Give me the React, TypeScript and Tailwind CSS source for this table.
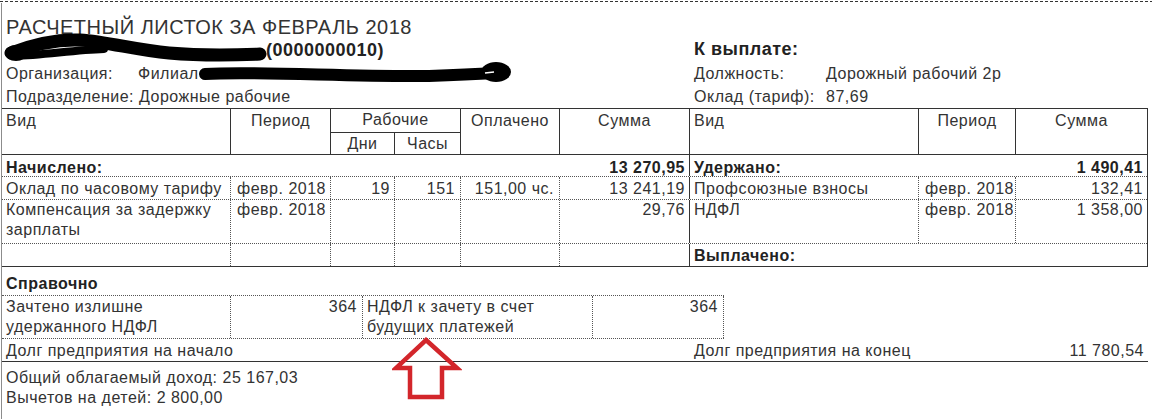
import React from "react";

function NameRedaction() {
  return (
    <svg width="262" height="24" viewBox="0 0 262 24" className="-ml-[2px] shrink-0 overflow-visible">
      <ellipse cx="12" cy="15" rx="11" ry="8" fill="#000" />
      <path
        d="M7 15 C 25 8, 50 1, 76 2 C 104 4, 132 12, 165 15 C 200 18, 235 17, 256 16"
        stroke="#000"
        strokeWidth="13"
        fill="none"
        strokeLinecap="round"
      />
      <path d="M10 18 C 40 17, 70 12, 100 11" stroke="#000" strokeWidth="8" fill="none" strokeLinecap="round" />
    </svg>
  );
}

function OrgRedaction() {
  return (
    <svg width="314" height="22" viewBox="0 0 314 22" className="shrink-0 overflow-visible">
      <path
        d="M6 11 C 60 8, 150 14, 230 13 C 260 12, 280 11, 296 10"
        stroke="#000"
        strokeWidth="12"
        fill="none"
        strokeLinecap="round"
      />
      <ellipse cx="297" cy="9" rx="15" ry="10" fill="#000" />
      <path d="M286 10 L 295 9" stroke="#fff" strokeWidth="1.5" />
    </svg>
  );
}

function UpArrow() {
  return (
    <svg
      width="70"
      height="66"
      viewBox="0 0 70 66"
      className="absolute left-[392px] top-[336px]"
    >
      <polygon
        points="34,4 65,32 50,32 50,61 18,61 18,32 4,32"
        fill="none"
        stroke="#d3262b"
        strokeWidth="4.5"
        strokeLinejoin="miter"
      />
    </svg>
  );
}

const dot = "border-dotted border-[#555]";

export default function App() {
  return (
    <div className="relative w-[1152px] h-[419px] overflow-hidden bg-white text-[#333] font-['Liberation_Sans',Arial,sans-serif] text-[16px] leading-[20px] tracking-[0.5px]">
      {/* cut line */}
      <div className="h-px mt-px bg-[repeating-linear-gradient(90deg,#333_0_3px,transparent_3px_5px)]" />

      <div className="mt-px ml-px h-[416px] border-l border-[#8c8c8c]">
        {/* Title block */}
        <div className="flex">
          <div className="w-[688px] pl-1">
            <div className="pt-[13px] text-[20px] leading-[22px]">РАСЧЕТНЫЙ ЛИСТОК ЗА ФЕВРАЛЬ 2018</div>
            <div className="flex items-center h-[24px] text-[18px] leading-[23px] font-bold text-[#222]">
              <NameRedaction />
              <span>(0000000010)</span>
            </div>
            <div className="flex items-center h-[23px] leading-[23px]">
              <span className="w-[132px] shrink-0">Организация:</span>
              <span>Филиал</span>
              <OrgRedaction />
            </div>
            <div className="h-[23px] leading-[23px]">Подразделение: Дорожные рабочие</div>
          </div>
          <div className="flex-1 pl-1 pt-[35px]">
            <div className="h-[24px] text-[18px] leading-[23px] font-bold text-[#222]">К выплате:</div>
            <div className="flex h-[23px] leading-[23px]">
              <span className="w-[132px]">Должность:</span>
              <span>Дорожный рабочий 2р</span>
            </div>
            <div className="flex h-[23px] leading-[23px]">
              <span className="w-[132px]">Оклад (тариф):</span>
              <span>87,69</span>
            </div>
          </div>
        </div>

        {/* Main table */}
        <div className="w-[1146px] border-t border-r border-[#333]">
          {/* header */}
          <div className="flex h-[46px] border-b border-[#333]">
            <div className="w-[229px] border-r border-[#333] pl-1 pt-[2px]">Вид</div>
            <div className="w-[100px] border-r border-[#333] text-center pt-[2px]">Период</div>
            <div className="w-[130px] border-r border-[#333] flex flex-col">
              <div className="h-[24px] border-b border-[#333] text-center pt-[1px]">Рабочие</div>
              <div className="flex flex-1">
                <div className="w-[64px] border-r border-[#333] text-center pt-px">Дни</div>
                <div className="flex-1 text-center pt-px">Часы</div>
              </div>
            </div>
            <div className="w-[99px] border-r border-[#333] text-center pt-[2px]">Оплачено</div>
            <div className="w-[130px] border-r border-[#333] text-center pt-[2px]">Сумма</div>
            <div className="w-[229px] border-r border-[#333] pl-1 pt-[2px]">Вид</div>
            <div className="w-[97px] border-r border-[#333] text-center pt-[2px]">Период</div>
            <div className="flex-1 text-center pt-[2px]">Сумма</div>
          </div>

          {/* totals */}
          <div className={`flex h-[22px] border-b ${dot} font-bold text-[#222]`}>
            <div className="w-[688px] border-r border-solid border-[#333] flex justify-between px-1 pt-[3px]">
              <span>Начислено:</span>
              <span>13 270,95</span>
            </div>
            <div className="flex-1 flex justify-between px-1 pt-[3px]">
              <span>Удержано:</span>
              <span>1 490,41</span>
            </div>
          </div>

          <div className={`flex h-[23px] border-b ${dot}`}>
            <div className={`w-[229px] border-r ${dot} pl-1 pt-[2px]`}>Оклад по часовому тарифу</div>
            <div className={`w-[100px] border-r ${dot} text-right pr-1 pt-[2px]`}>февр. 2018</div>
            <div className={`w-[64px] border-r ${dot} text-right pr-1 pt-[2px]`}>19</div>
            <div className={`w-[66px] border-r ${dot} text-right pr-[5px] pt-[2px]`}>151</div>
            <div className={`w-[99px] border-r ${dot} text-right pr-[5px] pt-[2px]`}>151,00 чс.</div>
            <div className="w-[130px] border-r border-[#333] text-right pr-1 pt-[2px]">13 241,19</div>
            <div className={`w-[229px] border-r ${dot} pl-1 pt-[2px]`}>Профсоюзные взносы</div>
            <div className={`w-[97px] border-r ${dot} text-right pr-px pt-[2px]`}>февр. 2018</div>
            <div className="flex-1 text-right pr-1 pt-[2px]">132,41</div>
          </div>

          <div className={`flex h-[44px] border-b ${dot}`}>
            <div className={`w-[229px] border-r ${dot} pl-1`}>
              Компенсация за задержку
              <br />
              зарплаты
            </div>
            <div className={`w-[100px] border-r ${dot} text-right pr-1`}>февр. 2018</div>
            <div className={`w-[64px] border-r ${dot}`} />
            <div className={`w-[66px] border-r ${dot}`} />
            <div className={`w-[99px] border-r ${dot}`} />
            <div className="w-[130px] border-r border-[#333] text-right pr-1">29,76</div>
            <div className={`w-[229px] border-r ${dot} pl-1`}>НДФЛ</div>
            <div className={`w-[97px] border-r ${dot} text-right pr-px`}>февр. 2018</div>
            <div className="flex-1 text-right pr-1">1 358,00</div>
          </div>

          <div className="flex h-[23px] border-b border-[#333]">
            <div className={`w-[229px] border-r ${dot}`} />
            <div className={`w-[100px] border-r ${dot}`} />
            <div className={`w-[64px] border-r ${dot}`} />
            <div className={`w-[66px] border-r ${dot}`} />
            <div className={`w-[99px] border-r ${dot}`} />
            <div className="w-[130px] border-r border-[#333]" />
            <div className="flex-1 pl-1 pt-[2px] font-bold text-[#222]">Выплачено:</div>
          </div>
        </div>

        {/* Reference section */}
        <div className={`w-[722px] h-[29px] border-b ${dot} pl-1 pt-[7px] font-bold text-[#222]`}>Справочно</div>
        <div className={`flex w-[722px] h-[43px] border-b ${dot}`}>
          <div className={`w-[229px] border-r ${dot} pl-1 pt-px`}>
            Зачтено излишне
            <br />
            удержанного НДФЛ
          </div>
          <div className={`w-[132px] border-r ${dot} text-right pr-[5px] pt-px`}>364</div>
          <div className={`w-[230px] border-r ${dot} pl-1 pt-px`}>
            НДФЛ к зачету в счет
            <br />
            будущих платежей
          </div>
          <div className={`w-[131px] border-r ${dot} text-right pr-[5px] pt-px`}>364</div>
        </div>
        <div className="flex w-[1146px] h-[23px] border-b border-[#333] pt-[2px]">
          <div className="w-[688px] pl-1">Долг предприятия на начало</div>
          <div className="flex-1 flex justify-between px-1">
            <span>Долг предприятия на конец</span>
            <span>11 780,54</span>
          </div>
        </div>

        <div className="pl-1 pt-[6px]">
          <div>Общий облагаемый доход: 25 167,03</div>
          <div>Вычетов на детей: 2 800,00</div>
        </div>
      </div>

      <UpArrow />
    </div>
  );
}
